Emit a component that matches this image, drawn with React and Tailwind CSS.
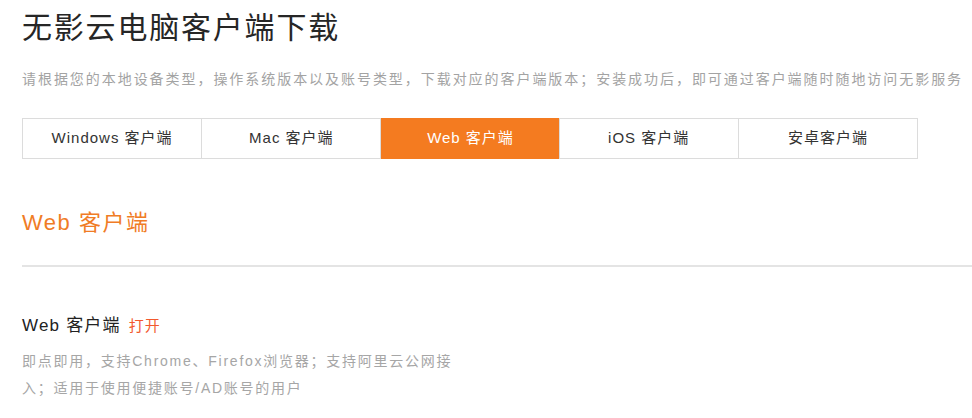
export default function App() {
  const tabs = ["Windows 客户端", "Mac 客户端", "Web 客户端", "iOS 客户端", "安卓客户端"];
  const font = { fontFamily: '"Liberation Sans", Arial, "Noto Sans CJK SC", sans-serif' };
  return (
    <div className="w-[972px] h-[418px] overflow-hidden bg-white pl-[22px]" style={font}>
      <h1 className="pt-[9px] text-[30px] leading-[38px] tracking-[1.8px] text-[#262626] whitespace-nowrap">
        无影云电脑客户端下载
      </h1>
      <p className="mt-[22px] text-[14px] leading-[20px] tracking-[1.95px] text-[#a3a3a3] whitespace-nowrap">
        请根据您的本地设备类型，操作系统版本以及账号类型，下载对应的客户端版本；安装成功后，即可通过客户端随时随地访问无影服务
      </p>
      <div className="mt-[29px] flex w-[896px]">
        {tabs.map((t, i) => (
          <div
            key={t}
            className={
              i === 2
                ? "flex h-[41px] flex-1 items-center justify-center bg-[#f47b20] text-[15px] tracking-[1px] text-white"
                : "flex h-[41px] flex-1 items-center justify-center border border-[#dcdcdc] text-[15px] tracking-[1px] text-[#333333] -ml-px first:ml-0"
            }
          >
            {t}
          </div>
        ))}
      </div>
      <h2 className="mt-[49px] text-[22px] leading-[30px] tracking-[1.5px] text-[#f07c26]">Web 客户端</h2>
      <div className="mt-[27px] h-[2px] w-full bg-[#e4e4e4]" />
      <div className="mt-[47px] flex items-baseline">
        <span className="text-[17px] leading-[24px] tracking-[1.2px] text-[#222222]">Web 客户端</span>
        <span className="ml-[8px] text-[15px] tracking-[1px] text-[#f2592e] cursor-pointer">打开</span>
      </div>
      <p className="mt-[10px] w-[440px] text-[14px] leading-[27px] tracking-[1.75px] text-[#a6a6a6]">
        即点即用，支持Chrome、Firefox浏览器；支持阿里云公网接入；适用于使用便捷账号/AD账号的用户
      </p>
    </div>
  );
}
